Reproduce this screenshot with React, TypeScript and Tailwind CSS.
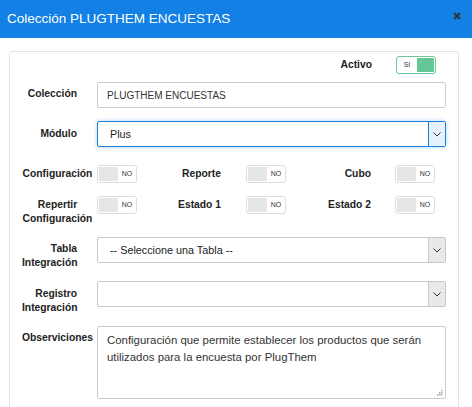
import React from "react";

function Toggle({ on }: { on?: boolean }) {
  if (on) {
    return (
      <div className="flex h-[18px] w-[40px] items-stretch rounded-[3px] border border-[#6cc899] bg-white">
        <span className="flex w-[20px] items-center justify-center text-[7px] text-[#333]">SI</span>
        <span className="my-[1px] mr-[1px] flex-1 rounded-[1px] bg-[#66c796]" />
      </div>
    );
  }
  return (
    <div className="flex h-[18px] w-[40px] items-stretch rounded-[3px] border border-[#dddddd] bg-white">
      <span className="my-[1px] ml-[1px] w-[19px] rounded-[1px] bg-[#e6e6e6]" />
      <span className="flex flex-1 items-center justify-center text-[7px] text-[#333]">NO</span>
    </div>
  );
}

function Arrow({ active }: { active?: boolean }) {
  return (
    <span
      className={
        "flex w-[17px] items-center justify-center border-l " +
        (active ? "border-[#1a7fd9] bg-[#e5f1fb]" : "border-[#c8c8c8] bg-[#e9e9e9]")
      }
    >
      <svg width="8" height="5" viewBox="0 0 8 5" fill="none">
        <path d="M0.5 0.5 L4 4 L7.5 0.5" stroke="#333" strokeWidth="1" />
      </svg>
    </span>
  );
}

function FieldLabel({ children }: { children: React.ReactNode }) {
  return (
    <div className="w-[55px] shrink-0 text-right text-[10.3px] font-bold leading-[14px] text-[#222]">
      {children}
    </div>
  );
}

export default function App() {
  return (
    <div className="h-[407px] w-[472px] overflow-hidden bg-white font-['Liberation_Sans',Arial,sans-serif]">
      {/* header */}
      <div className="flex h-[38px] items-center justify-between bg-[#1380e6] pl-[7px] pr-[11px]">
        <h1 className="text-[13.5px] text-white">Colección PLUGTHEM ENCUESTAS</h1>
        <svg width="8" height="8" viewBox="0 0 8 8" className="mb-[6px]">
          <path d="M1 1 L7 7 M7 1 L1 7" stroke="#333" strokeWidth="2" />
        </svg>
      </div>

      <div className="pl-[9px] pr-[13px] pt-[13px]">
        <div className="h-[400px] rounded-[3px] border border-[#e3e3e3] pt-[4px] pl-[12px] pr-[12px]">
          {/* activo */}
          <div className="flex items-center justify-end pr-[10px]">
            <span className="mr-[24px] text-[10.3px] font-bold text-[#222]">Activo</span>
            <Toggle on />
          </div>

          {/* colección */}
          <div className="mt-[8px] flex">
            <FieldLabel>
              <div className="pt-[5px]">Colección</div>
            </FieldLabel>
            <div className="ml-[20px] flex h-[26px] flex-1 items-center rounded-[2px] border border-[#cccccc] px-[9px] text-[10px] text-[#333]">
              PLUGTHEM ENCUESTAS
            </div>
          </div>

          {/* módulo */}
          <div className="mt-[13px] flex">
            <FieldLabel>
              <div className="pt-[6px]">Módulo</div>
            </FieldLabel>
            <div className="ml-[20px] flex h-[26px] flex-1 rounded-[2px] border border-[#1a7fd9] shadow-[0_0_4px_rgba(26,127,217,0.35)]">
              <span className="flex flex-1 items-center px-[12px] text-[10.8px] text-[#222]">Plus</span>
              <Arrow active />
            </div>
          </div>

          {/* toggles */}
          <div className="mt-[18px] flex items-start">
            <div className="-ml-[4px] w-[79px] pt-[2px] text-center text-[10.3px] font-bold leading-[14px] text-[#222]">
              Configuración
            </div>
            <Toggle />
            <div className="w-[84px] pt-[2px] text-right text-[10.3px] font-bold leading-[14px] text-[#222]">Reporte</div>
            <div className="ml-[25px]"><Toggle /></div>
            <div className="w-[85px] pt-[2px] text-right text-[10.3px] font-bold leading-[14px] text-[#222]">Cubo</div>
            <div className="ml-[24px]"><Toggle /></div>
          </div>

          <div className="mt-[13px] flex items-start">
            <div className="-ml-[4px] w-[79px] pt-[2px] text-center text-[10.3px] font-bold leading-[14px] text-[#222]">
              Repertir Configuración
            </div>
            <Toggle />
            <div className="w-[84px] pt-[2px] text-right text-[10.3px] font-bold leading-[14px] text-[#222]">Estado 1</div>
            <div className="ml-[25px]"><Toggle /></div>
            <div className="w-[85px] pt-[2px] text-right text-[10.3px] font-bold leading-[14px] text-[#222]">Estado 2</div>
            <div className="ml-[24px]"><Toggle /></div>
          </div>

          {/* tabla integración */}
          <div className="mt-[11px] flex">
            <FieldLabel>
              <div className="pt-[5px]">Tabla Integración</div>
            </FieldLabel>
            <div className="ml-[20px] flex h-[26px] flex-1 rounded-[2px] border border-[#c8c8c8]">
              <span className="flex flex-1 items-center px-[12px] text-[10.8px] text-[#222]">
                -- Seleccione una Tabla --
              </span>
              <Arrow />
            </div>
          </div>

          {/* registro integración */}
          <div className="mt-[11px] flex">
            <FieldLabel>
              <div className="pt-[6px]">Registro Integración</div>
            </FieldLabel>
            <div className="ml-[20px] flex h-[26px] flex-1 rounded-[2px] border border-[#c8c8c8]">
              <span className="flex-1" />
              <Arrow />
            </div>
          </div>

          {/* observaciones */}
          <div className="mt-[11px] flex">
            <FieldLabel>
              <div className="whitespace-nowrap pt-[5px] text-left">Observiciones</div>
            </FieldLabel>
            <div className="relative ml-[20px] h-[73px] flex-1 rounded-[2px] border border-[#cccccc] px-[9px] pt-[5px] text-[11.4px] leading-[17px] text-[#333]">
              Configuración que permite establecer los productos que serán utilizados para la encuesta por PlugThem
              <svg width="6" height="6" viewBox="0 0 6 6" className="absolute bottom-[2px] right-[2px]">
                <rect x="4" y="0" width="1.5" height="1.5" fill="#aaa" />
                <rect x="2" y="2" width="1.5" height="1.5" fill="#aaa" />
                <rect x="4" y="2" width="1.5" height="1.5" fill="#aaa" />
                <rect x="0" y="4" width="1.5" height="1.5" fill="#aaa" />
                <rect x="2" y="4" width="1.5" height="1.5" fill="#aaa" />
                <rect x="4" y="4" width="1.5" height="1.5" fill="#aaa" />
              </svg>
            </div>
          </div>
        </div>
      </div>
    </div>
  );
}
